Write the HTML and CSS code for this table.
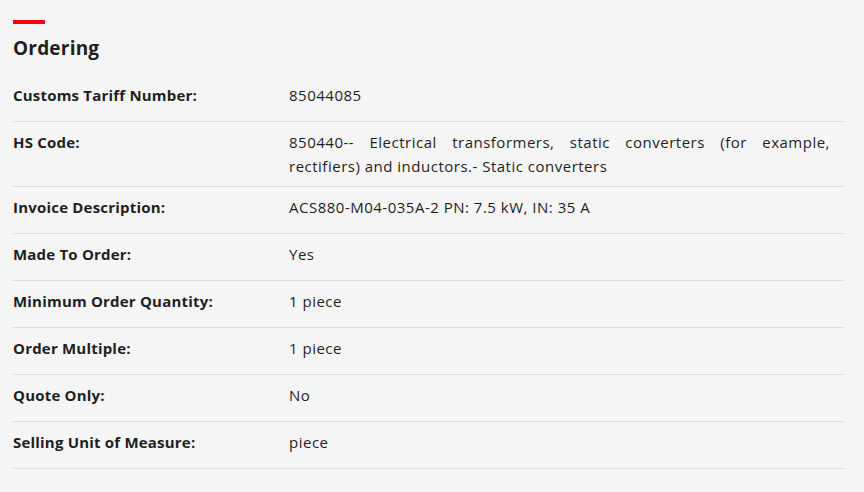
FILE: index.html
```html
<!DOCTYPE html>
<html>
<head>
<meta charset="utf-8">
<link rel="stylesheet" href="styles.css">
</head>
<body>
<section class="panel">
  <div class="accent"></div>
  <h2 class="title">Ordering</h2>
  <div class="table">
    <div class="row"><div class="label">Customs Tariff Number:</div><div class="value">85044085</div></div>
    <div class="row"><div class="label">HS Code:</div><div class="value justify">850440-- Electrical transformers, static converters (for example, rectifiers) and inductors.- Static converters</div></div>
    <div class="row"><div class="label">Invoice Description:</div><div class="value">ACS880-M04-035A-2 PN: 7.5 kW, IN: 35 A</div></div>
    <div class="row"><div class="label">Made To Order:</div><div class="value">Yes</div></div>
    <div class="row"><div class="label">Minimum Order Quantity:</div><div class="value">1 piece</div></div>
    <div class="row"><div class="label">Order Multiple:</div><div class="value">1 piece</div></div>
    <div class="row"><div class="label">Quote Only:</div><div class="value">No</div></div>
    <div class="row"><div class="label">Selling Unit of Measure:</div><div class="value">piece</div></div>
  </div>
</section>
</body>
</html>
```
FILE: styles.css
```css
html, body {
  margin: 0;
  padding: 0;
  background: #f5f5f5;
}
body {
  font-family: "Open Sans", "Noto Sans", sans-serif;
  color: #1f1f1f;
  font-size: 15px;
}
.panel {
  padding: 20px 20px 0 13px;
  width: 831px;
}
.accent {
  width: 32px;
  height: 4px;
  background: #ff000f;
}
.title {
  margin: 10px 0 0 0;
  font-size: 19px;
  line-height: 28px;
  font-weight: 700;
  letter-spacing: 0.2px;
}
.table {
  margin-top: 13px;
}
.row {
  display: grid;
  grid-template-columns: 276px 1fr;
  box-sizing: border-box;
  min-height: 47px;
  padding: 8px 14px 8px 0;
  border-bottom: 1px solid #dcdcdc;
  line-height: 24px;
}
.label {
  font-weight: 700;
  letter-spacing: 0.2px;
}
.value {
  letter-spacing: 0.5px;
}
.justify {
  text-align: justify;
}
```
